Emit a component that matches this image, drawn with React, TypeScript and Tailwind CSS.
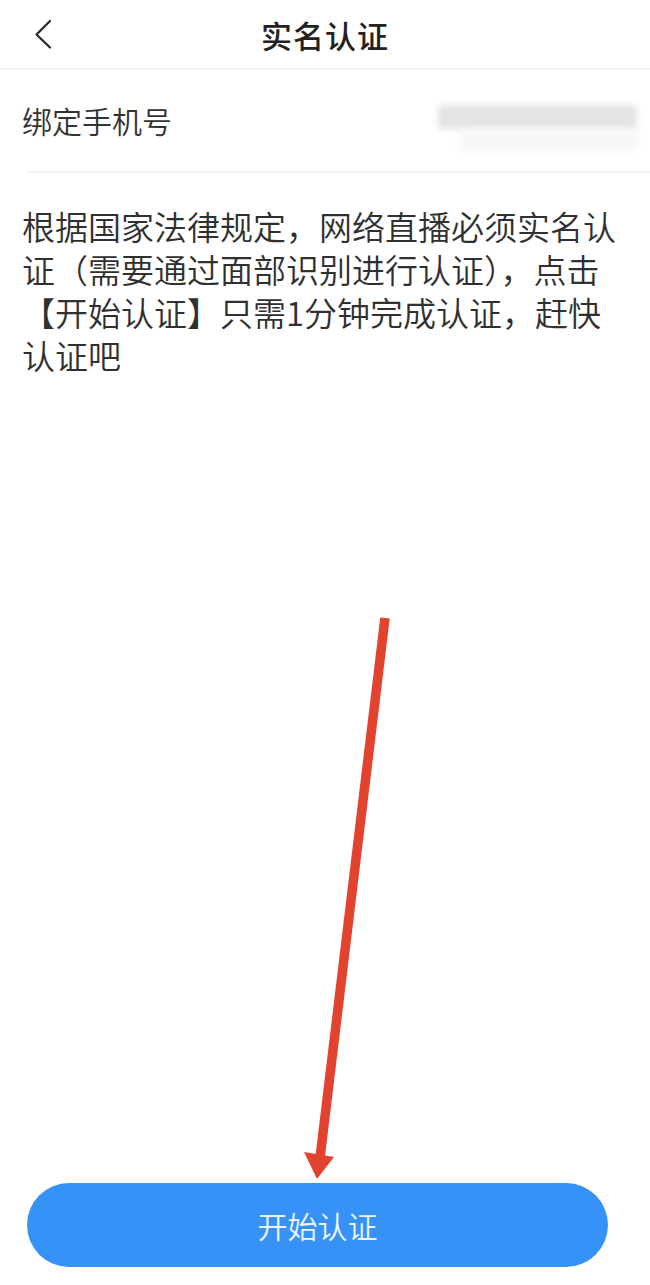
import React from 'react';

const cjk = { fontFamily: '"Noto Sans CJK SC", "Noto Sans", sans-serif' };

function Header() {
  return (
    <div className="grid h-[70px] grid-cols-[1fr_auto_1fr] items-center border-b-2 border-[#f3f3f3]">
      <div className="pl-[34px]">
        <svg width="20" height="32" viewBox="0 0 20 32" fill="none">
          <path d="M16 3 L2.5 16.5 L16 29.5" stroke="#2a2a2a" strokeWidth="2.3" strokeLinecap="round" strokeLinejoin="round" />
        </svg>
      </div>
      <h1 className="text-[31px] font-medium leading-none text-[#222] tracking-[1px]">实名认证</h1>
      <div />
    </div>
  );
}

function PhoneRow() {
  return (
    <div className="ml-[26px] flex h-[103px] items-center justify-between border-b-2 border-[#f3f3f3] pr-[13px]">
      <span className="-ml-[4px] text-[30px] font-[350] text-[#333]">绑定手机号</span>
      <div className="relative mt-[-8px] h-[24px] w-[199px]">
        <div className="h-full w-full rounded-[4px] bg-[#e4e4e4] blur-[3px]" />
        <div className="absolute left-[22px] top-[24px] h-[22px] w-[177px] bg-[#f6f6f6] blur-[4px]" />
      </div>
    </div>
  );
}

function Arrow() {
  return (
    <svg className="pointer-events-none absolute left-0 top-0" width="650" height="1285" viewBox="0 0 650 1285">
      <line x1="385" y1="618" x2="320" y2="1158" stroke="#e2432f" strokeWidth="9.5" />
      <polygon points="304,1152 334,1157 317,1179" fill="#e2432f" />
    </svg>
  );
}

export default function App() {
  return (
    <div className="relative flex min-h-[1285px] w-[650px] flex-col bg-white" style={cjk}>
      <Header />
      <PhoneRow />
      <p className="px-[22px] pt-[32px] text-[33px] font-[350] leading-[43px] text-[#303030]">
        根据国家法律规定，网络直播必须实名认证（需要通过面部识别进行认证），点击【开始认证】只需1分钟完成认证，赶快认证吧
      </p>
      <div className="mt-auto mb-[18px] ml-[27px] w-[581px]">
        <button className="flex h-[84px] w-full items-center justify-center rounded-full bg-[#3692f6] text-[30px] font-[350] text-[#eef5ff]">
          开始认证
        </button>
      </div>
      <Arrow />
    </div>
  );
}
